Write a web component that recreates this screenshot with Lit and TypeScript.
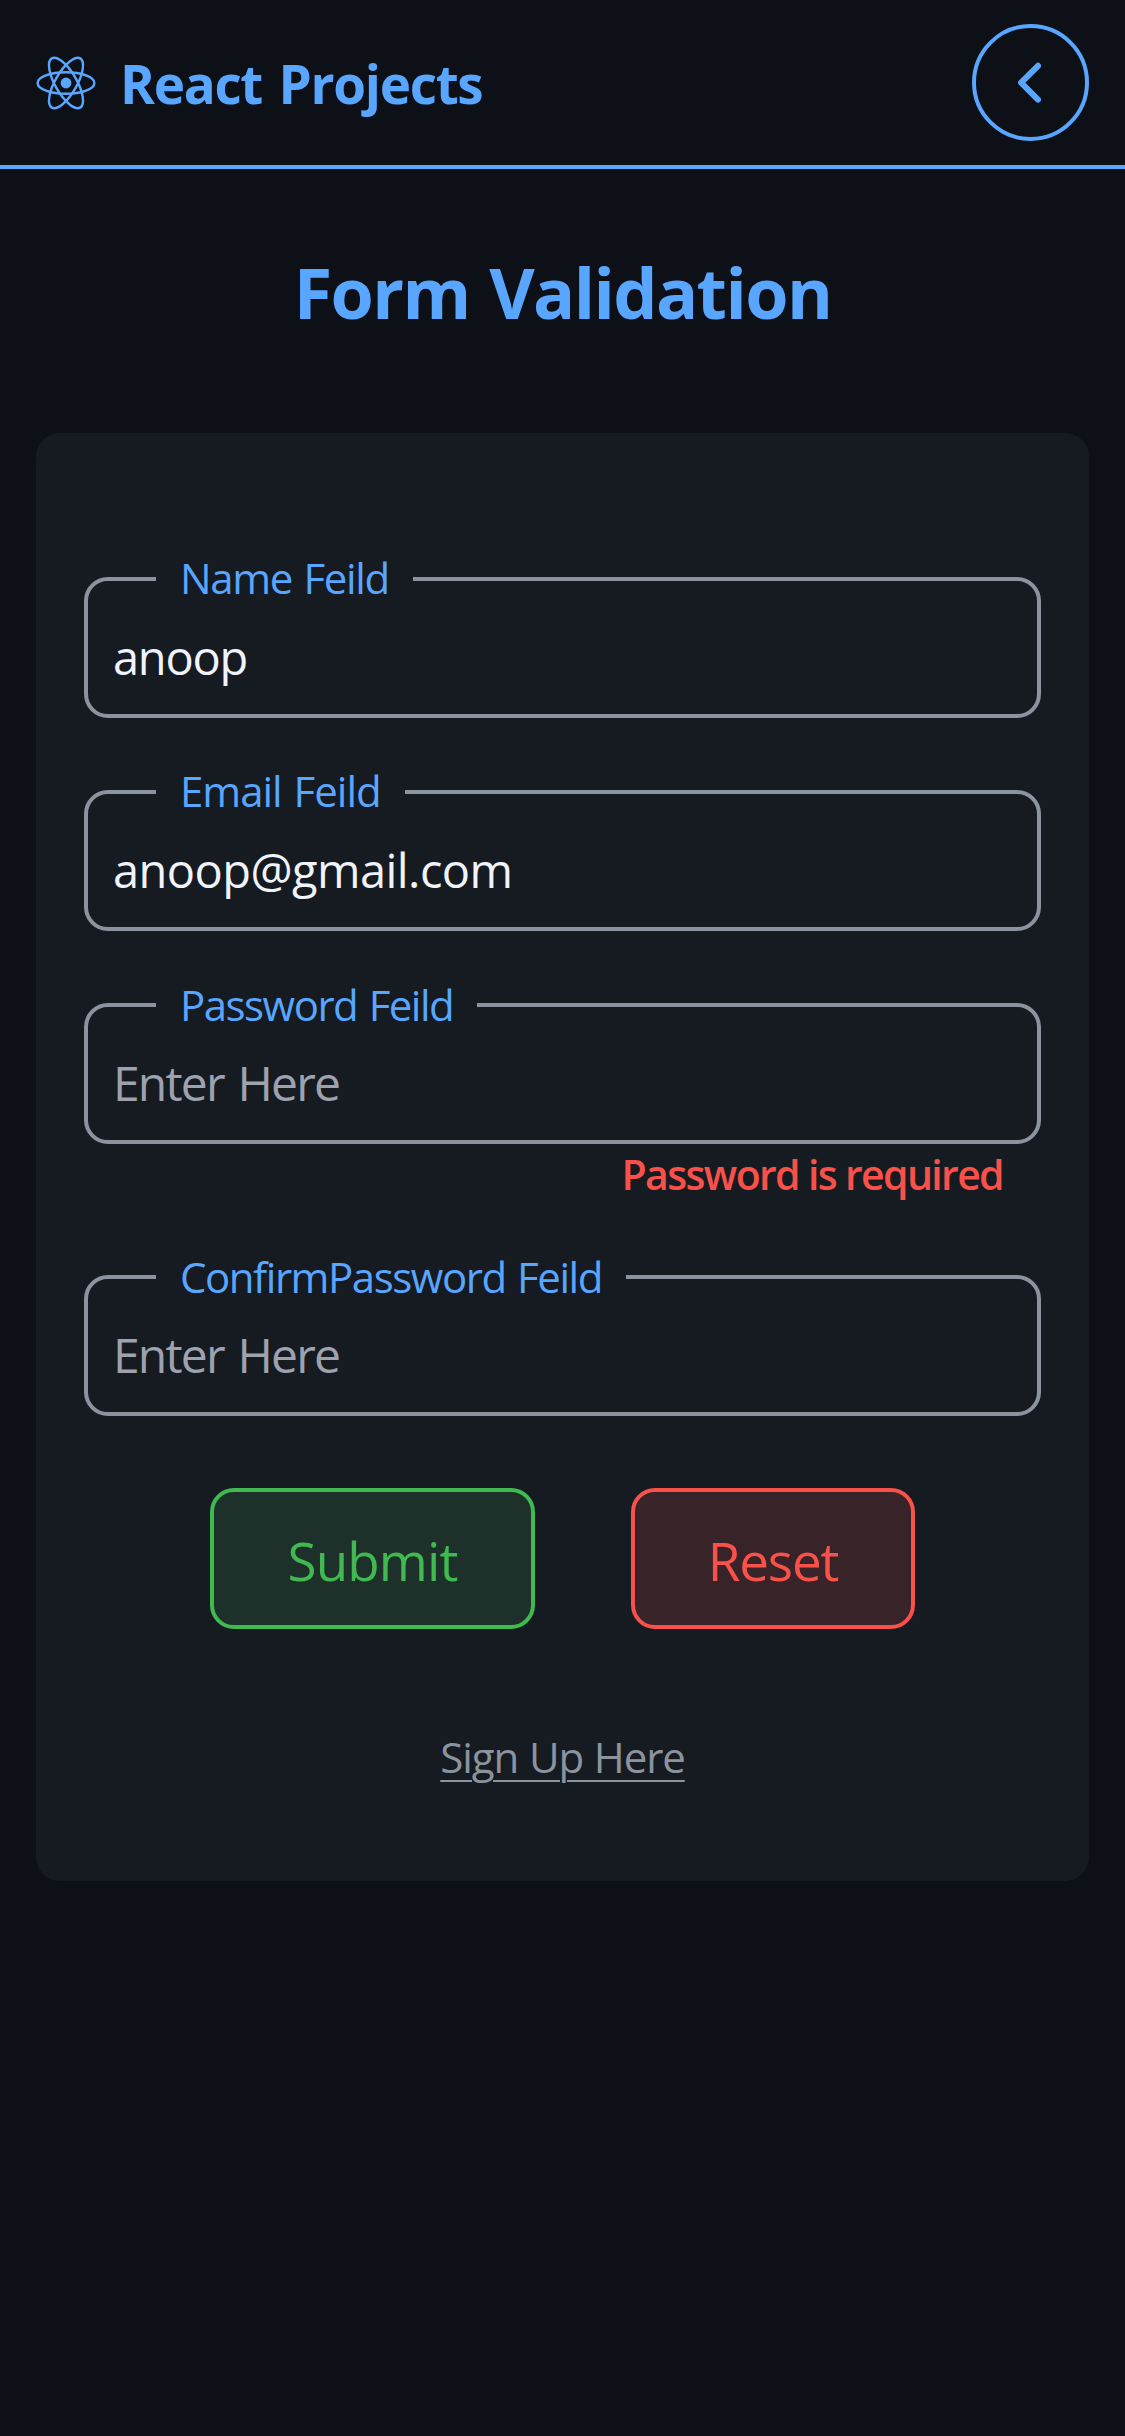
import { LitElement, html, css, svg, nothing } from "lit";
import { customElement, property, state } from "lit/decorators.js";
import { classMap } from "lit/directives/class-map.js";

interface Field {
  key: string;
  label: string;
  value: string;
  error?: string;
}

@customElement("app-header")
export class AppHeader extends LitElement {
  static styles = css`
    :host {
      display: block;
    }
    .bar {
      box-sizing: border-box;
      height: 169px;
      padding: 0 36px 0 36px;
      display: flex;
      align-items: center;
      justify-content: space-between;
      border-bottom: 4px solid #58a6ff;
      color: #58a6ff;
    }
    .brand {
      display: flex;
      align-items: center;
      gap: 24px;
    }
    .logo {
      display: block;
      width: 60px;
      height: 60px;
    }
    .title {
      font-size: 53px;
      line-height: 76px;
      font-weight: 700;
      letter-spacing: -1.3px;
      word-spacing: 4px;
      padding-top: 3px;
    }
    .back {
      box-sizing: border-box;
      width: 117px;
      height: 117px;
      padding: 0;
      border: 4px solid #58a6ff;
      border-radius: 50%;
      background: none;
      display: block;
    }
    .chevron {
      display: block;
      width: 109px;
      height: 109px;
    }
  `;

  render() {
    const orbit = (angle: number) =>
      svg`<ellipse cx="30" cy="30" rx="28.4" ry="10.8" transform="rotate(${angle} 30 30)" />`;
    return html`
      <header class="bar">
        <div class="brand">
          <svg class="logo" viewBox="0 0 60 60" fill="none" stroke="#58a6ff" stroke-width="2.4">
            ${[0, 60, 120].map(orbit)}
            <circle cx="30" cy="30" r="5.4" fill="#58a6ff" stroke="none" />
          </svg>
          <div class="title">React Projects</div>
        </div>
        <button class="back" aria-label="Back">
          <svg class="chevron" viewBox="0 0 109 109" fill="none" stroke="#58a6ff" stroke-width="6"
            stroke-linecap="round" stroke-linejoin="round">
            <path d="M62 37.8 L45.1 54.7 L62 71.6" />
          </svg>
        </button>
      </header>
    `;
  }
}

@customElement("form-field")
export class FormField extends LitElement {
  static styles = css`
    :host {
      display: block;
    }
    .box {
      box-sizing: border-box;
      height: 167px;
      margin: 0;
      padding: 0 0 7px;
      border: 4px solid #8b949e;
      border-radius: 24px;
      min-width: 0;
    }
    .legend {
      margin-left: 68px;
      padding: 0 24px 2px;
      font-size: 42px;
      line-height: 54px;
      font-weight: 400;
      color: #58a6ff;
      white-space: nowrap;
      word-spacing: 2px;
    }
    .name { letter-spacing: -1.36px; }
    .email { letter-spacing: -1.01px; }
    .password { letter-spacing: -1.51px; }
    .confirm { letter-spacing: -1.46px; }
    .legend.password,
    .legend.confirm {
      line-height: 56px;
      padding-bottom: 0;
    }
    .input {
      display: block;
      box-sizing: border-box;
      width: 100%;
      height: 100px;
      padding: 0 25px;
      border: 0;
      outline: 0;
      background: none;
      font-family: inherit;
      font-size: 47px;
      line-height: 100px;
      font-weight: 400;
      color: #f0f3fa;
      letter-spacing: -1.25px;
    }
    .input.email { letter-spacing: -0.56px; }
    .input::placeholder {
      color: #9ea2ae;
      opacity: 1;
      font-size: 48px;
      letter-spacing: -1.8px;
      word-spacing: 3px;
    }
    .error {
      padding: 2px 38px 0 0;
      text-align: right;
      font-size: 41px;
      line-height: 57px;
      font-weight: 600;
      letter-spacing: -1.65px;
      color: #f85149;
    }
  `;

  @property({ attribute: false }) field!: Field;

  render() {
    const f = this.field;
    return html`
      <fieldset class="box">
        <legend class=${classMap({ legend: true, [f.key]: true })}>${f.label}</legend>
        <input class=${classMap({ input: true, [f.key]: true })} .value=${f.value}
          placeholder="Enter Here" spellcheck="false" />
      </fieldset>
      ${f.error ? html`<div class="error">${f.error}</div>` : nothing}
    `;
  }
}

@customElement("app-root")
export class AppRoot extends LitElement {
  static styles = css`
    :host {
      display: block;
      min-height: 2436px;
      background: #0d1117;
      font-family: "Open Sans", "Noto Sans", sans-serif;
    }
    .heading {
      margin: 0;
      padding-top: 75px;
      text-align: center;
      font-size: 70px;
      line-height: 96px;
      font-weight: 700;
      letter-spacing: -1.6px;
      word-spacing: 3px;
      color: #58a6ff;
    }
    .card {
      box-sizing: border-box;
      height: 1448px;
      margin: 93px 36px 0;
      padding: 118px 48px 0;
      border-radius: 24px;
      background: #161b22;
    }
    .fields {
      display: flex;
      flex-direction: column;
      gap: 46px;
    }
    .actions {
      display: flex;
      justify-content: center;
      gap: 96px;
      margin-top: 72px;
    }
    .btn {
      box-sizing: border-box;
      height: 141px;
      padding: 4px 0 0;
      border: 4px solid;
      border-radius: 24px;
      font-family: inherit;
      font-size: 53px;
      font-weight: 400;
    }
    .submit {
      width: 325px;
      color: #3fb950;
      background: #1d3029;
      letter-spacing: -0.9px;
    }
    .reset {
      width: 284px;
      color: #f85149;
      background: #382328;
      letter-spacing: -1.2px;
    }
    .foot {
      margin-top: 99px;
      text-align: center;
      font-size: 42px;
      line-height: 58px;
      color: #8b949e;
      letter-spacing: -1.1px;
      word-spacing: 1px;
    }
    .link {
      color: inherit;
      text-decoration: underline;
      text-decoration-thickness: 2px;
      text-underline-offset: 7px;
    }
  `;

  @state() private fields: Field[] = [
    { key: "name", label: "Name Feild", value: "anoop" },
    { key: "email", label: "Email Feild", value: "anoop@gmail.com" },
    { key: "password", label: "Password Feild", value: "", error: "Password is required" },
    { key: "confirm", label: "ConfirmPassword Feild", value: "" },
  ];

  render() {
    return html`
      <app-header></app-header>
      <h1 class="heading">Form Validation</h1>
      <main class="card">
        <div class="fields">
          ${this.fields.map((f) => html`<form-field .field=${f}></form-field>`)}
        </div>
        <div class="actions">
          <button class="btn submit">Submit</button>
          <button class="btn reset">Reset</button>
        </div>
        <div class="foot"><a class="link" href="#">Sign Up Here</a></div>
      </main>
    `;
  }
}
